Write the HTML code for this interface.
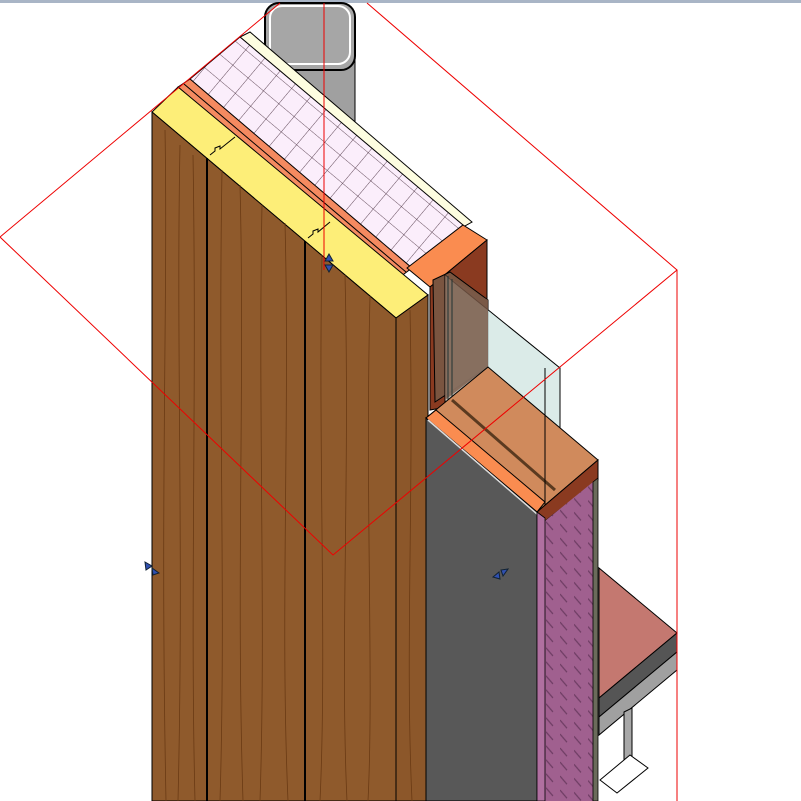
<!DOCTYPE html>
<html><head><meta charset="utf-8"><style>html,body{margin:0;padding:0;background:#fff}svg{display:block}</style></head>
<body>
<svg width="801" height="801" viewBox="0 0 801 801" xmlns="http://www.w3.org/2000/svg">
<defs>
<pattern id="grid" width="20" height="20" patternUnits="userSpaceOnUse" patternTransform="rotate(40)">
<rect width="20" height="20" fill="#fbeefb"/><path d="M0 0H20M0 0V20" stroke="#3a2030" stroke-width="0.8"/>
</pattern>
<pattern id="hatch" width="14" height="14" patternUnits="userSpaceOnUse" patternTransform="skewY(-40)">
<rect width="14" height="14" fill="#a0608f"/><path d="M0 0L7 14" stroke="#6a3a60" stroke-width="0.8"/>
</pattern>
</defs>
<rect width="801" height="801" fill="#fff"/>
<rect x="0" y="0" width="801" height="3" fill="#a9b5c6"/>
<rect x="265" y="20" width="90" height="110" fill="#a0a0a0" stroke="#000"/>
<rect x="265" y="3" width="90" height="67" rx="14" fill="#a6a6a6" stroke="#000" stroke-width="2"/>
<rect x="270" y="6" width="80" height="58" rx="12" fill="none" stroke="#fff" stroke-width="2"/>
<polygon points="240,37 250,32 472,222 463,227" fill="#fdfde0" stroke="#000" stroke-width="1"/>
<polygon points="190,79 240,37 463,225 410,267" fill="url(#grid)" stroke="#000"/>
<polygon points="178,87 190,79 412,268 400,277" fill="#f48a60" stroke="#000"/>
<line x1="184" y1="84" x2="406" y2="272" stroke="#000"/>
<polygon points="407,268 463,225 487,240 430,287" fill="#fa8c50" stroke="#000"/>
<polygon points="430,287 487,240 487,400 430,410" fill="#8a3a20" stroke="#000"/>
<polygon points="152,112 178,87 428,295 396,318" fill="#fdee78" stroke="#000"/>
<path d="M210 155 l5-4 v-3 l5 -2 v3 l15-12" stroke="#000" fill="none"/>
<path d="M308 238 l5-4 v-3 l5 -2 v3 l12-10" stroke="#000" fill="none"/>
<polygon points="152,112 396,318 396,801 152,801" fill="#8f5a2c" stroke="#000"/>
<polygon points="396,318 428,295 428,801 396,801" fill="#8c572a" stroke="#000"/>
<g stroke="#6a3a14" stroke-width="0.8" fill="none">
<path d="M165 130 C168 300 160 500 166 801"/><path d="M180 145 C176 350 184 550 178 801"/>
<path d="M193 155 C197 400 190 600 195 801"/><path d="M222 170 C218 400 226 600 220 801"/>
<path d="M240 185 C245 380 236 580 243 801"/><path d="M262 205 C258 420 266 620 260 801"/>
<path d="M285 223 C290 420 280 620 288 801"/><path d="M322 255 C318 450 327 650 320 801"/>
<path d="M345 275 C350 480 340 650 347 801"/><path d="M370 296 C365 500 374 680 368 801"/>
<path d="M410 310 C414 500 405 650 412 801"/>
</g>
<line x1="207" y1="158" x2="207" y2="801" stroke="#000" stroke-width="2"/>
<line x1="305" y1="241" x2="305" y2="801" stroke="#000" stroke-width="2"/>
<polygon points="433,280 450,272 488,300 488,367 435,402" fill="#7a5540" stroke="#000"/>
<polygon points="445,275 560,368 560,498 545,505 445,415" fill="#cfe4e0" fill-opacity="0.75" stroke="#000"/>
<polygon points="445,275 488,300 488,367 445,400" fill="#7a5a48" fill-opacity="0.8"/>
<line x1="448" y1="276" x2="448" y2="410" stroke="#233"/>
<line x1="452" y1="279" x2="452" y2="410" stroke="#233"/>
<polygon points="426,418 488,367 598,460 537,512" fill="#d08a5c" stroke="#000"/>
<polygon points="426,418 436,410 545,502 537,512" fill="#fa8c50" stroke="#000"/>
<line x1="452" y1="400" x2="555" y2="490" stroke="#5a3a20" stroke-width="3"/>
<line x1="545" y1="368" x2="545" y2="505" stroke="#000"/>
<polygon points="426,418 537,512 537,801 426,801" fill="#585858" stroke="#000"/>
<line x1="428" y1="420" x2="537" y2="514" stroke="#ddd" stroke-width="1.5"/>
<polygon points="537,512 598,460 598,480 540,525" fill="#8a3a20" stroke="#000"/>
<polygon points="540,525 593,482 593,801 540,801" fill="url(#hatch)"/>
<polygon points="537,512 545,518 545,801 537,801" fill="#b070a0" stroke="#000" stroke-width="0.8"/>
<polygon points="593,482 598,478 598,801 593,801" fill="#6b6b5b" stroke="#000" stroke-width="0.8"/>
<polygon points="599,568 677,633 599,698" fill="#c47870" stroke="#000"/>
<polygon points="599,698 677,633 677,652 599,717" fill="#555" stroke="#000"/>
<polygon points="599,717 677,652 677,670 599,735" fill="#a0a0a0" stroke="#000"/>
<polygon points="624,712 632,708 632,775 624,779" fill="#a8a8a8" stroke="#000"/>
<polygon points="600,780 630,755 648,768 617,793" fill="#fff" stroke="#000"/>
<g stroke="#e00" stroke-width="1" fill="none">
<polyline points="280,3 0,237 333,555 677,270 367,3"/>
<line x1="677" y1="270" x2="677" y2="801"/>
<line x1="324" y1="3" x2="324" y2="270"/>
</g>
<g fill="#3050b0" stroke="#123">
<polygon points="329,254 325,261 333,261"/><polygon points="329,272 325,265 333,265"/>
<polygon points="145,562 152,566 146,570"/><polygon points="159,573 152,568 153,575"/>
<polygon points="493,577 499,572 500,579"/><polygon points="508,569 501,570 503,576"/>
</g>
</svg>
</body></html>
